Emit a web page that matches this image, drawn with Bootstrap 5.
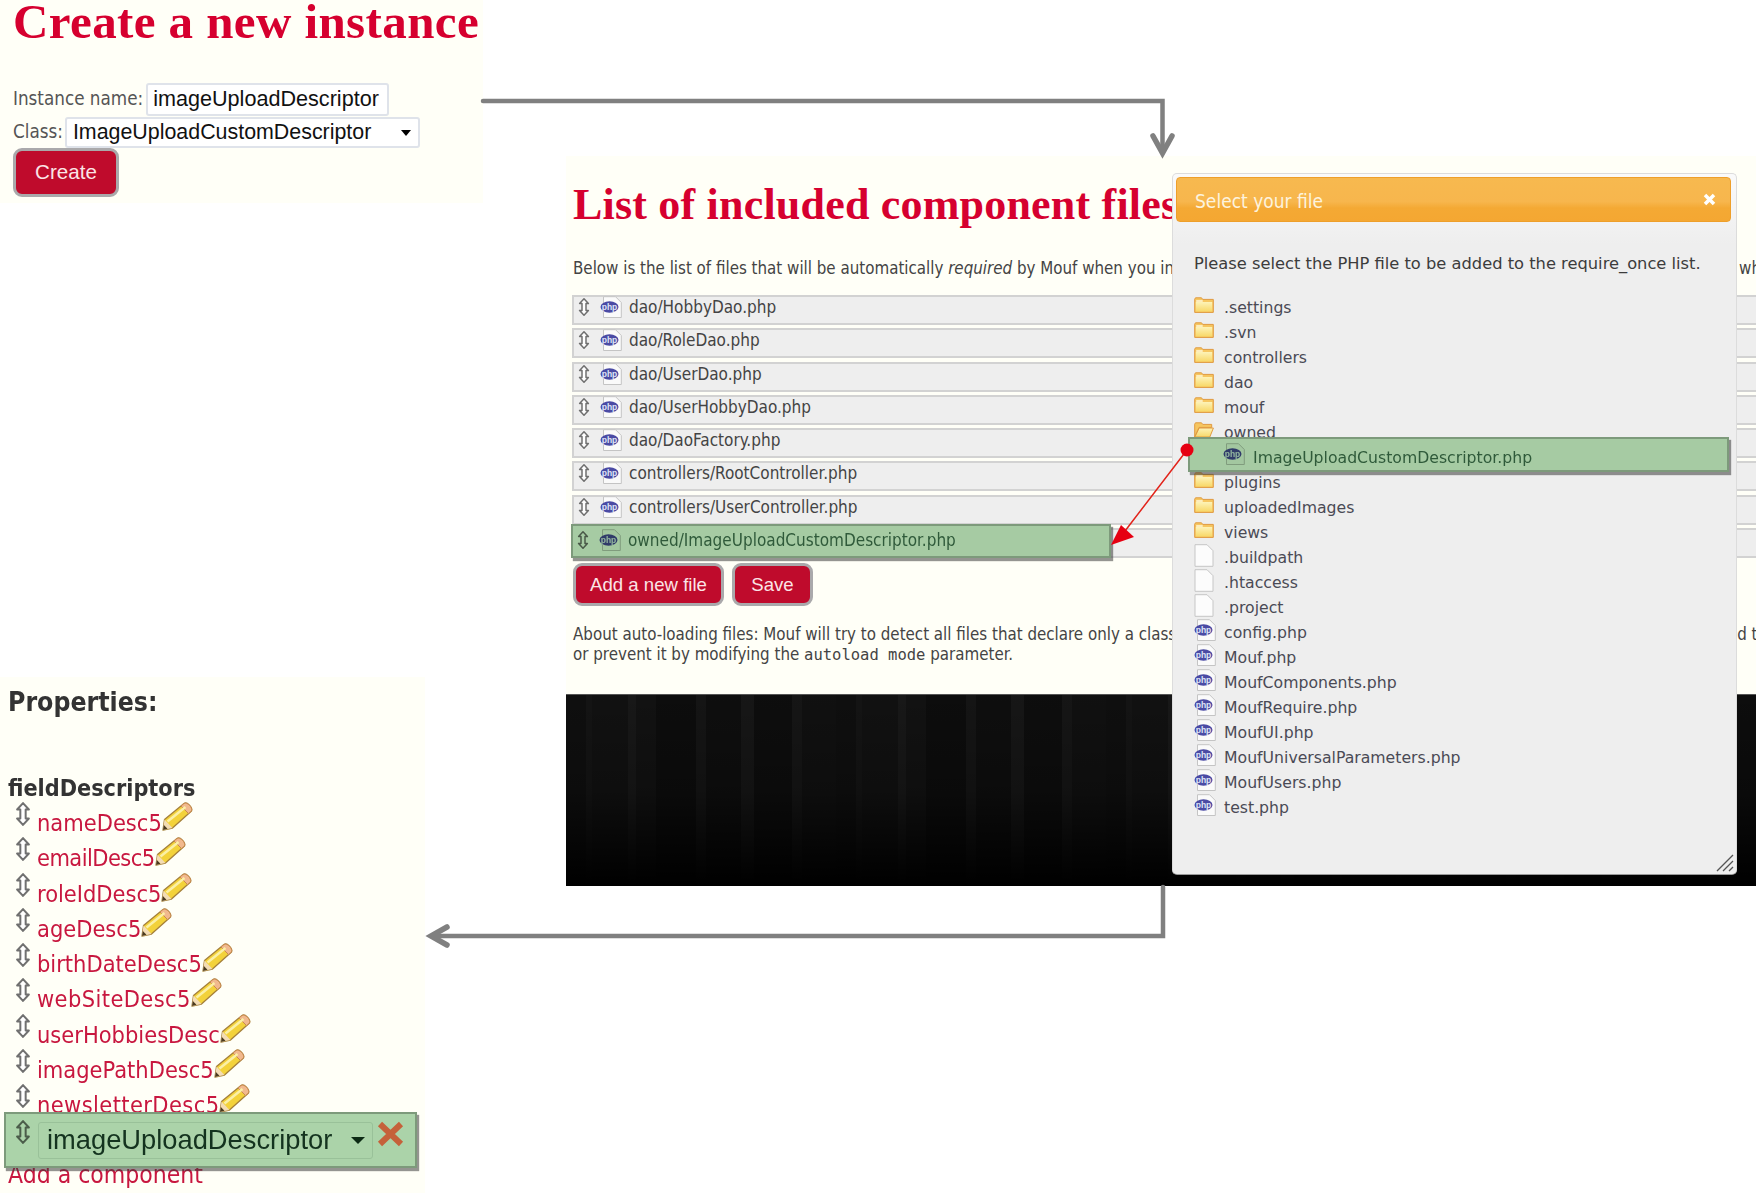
<!DOCTYPE html>
<html lang="en">
<head>
    <meta charset="UTF-8">
    <title>Mouf - create instance, select file, properties</title>
    <link href="https://cdn.jsdelivr.net/npm/bootstrap@5.3.0/dist/css/bootstrap.min.css" rel="stylesheet">
    <style>
        body { background: #fff; margin: 0; overflow: hidden; }
        .canvas { position: relative; width: 1756px; height: 1193px; overflow: hidden; filter: blur(.4px); }
        .tahoma { font-family: "DejaVu Sans", sans-serif; font-stretch: condensed; color: #444; }
        .shot { position: absolute; background: #fffff7; overflow: hidden; }
        .shot-create { left: 0; top: 0; width: 483px; height: 203px; }
        .shot-list { left: 566px; top: 156px; width: 1190px; height: 730px; display: flex; flex-direction: column; }
        .shot-props { left: 0; top: 677px; width: 425px; height: 516px; }
        .red-title { font-family: "Liberation Serif", serif; font-weight: 700; color: #d6002f; margin: 0; white-space: nowrap; }
        .red-title-lg { font-size: 49px; letter-spacing: .4px; line-height: 44px; padding-left: 13px; }
        .red-title-md { font-size: 44px; letter-spacing: .2px; line-height: 50px; padding: 24px 0 0 7px; }
        .form-area { padding: 39px 0 0 13px; }
        .form-line { display: flex; align-items: center; font-size: 18.7px; color: #555; }
        .fake-field { font-family: "Liberation Sans", sans-serif; color: #111; background: #fff; border: 2px solid #dfe3ea; border-radius: 3px; display: flex; align-items: center; justify-content: space-between; white-space: nowrap; }
        .field-name { width: 243px; height: 33px; font-size: 21.6px; padding-left: 5px; margin-left: 3px; }
        .field-class { width: 355px; height: 31px; font-size: 21.4px; padding: 0 7px 0 6px; margin: 1px 0 0 2px; }
        .caret-down { width: 0; height: 0; border-left: 5.5px solid transparent; border-right: 5.5px solid transparent; border-top: 6px solid #000; }
        .btn-mouf { background: #bf0b2c; color: #fbe4e6; border: 3px solid #aaa9ab; border-radius: 9px; font-family: "Liberation Sans", sans-serif; font-size: 18.6px; padding: 0; height: 43px; display: flex; align-items: center; justify-content: center; }
        .btn-create { width: 106px; height: 49px; font-size: 20.6px; }
        .btn-add { width: 151px; }
        .btn-save { width: 81px; }
        .intro-line { font-size: 16.8px; padding: 0 0 0 7px; margin: 25px 0 0; white-space: nowrap; height: 26px; line-height: 26px; }
        .hole-a { display: inline-block; width: 565px; }
        .hole-b { display: inline-block; width: 561px; }
        .file-rows { padding: 14px 0 0 6px; }
        .file-row { position: relative; height: 30px; margin-bottom: 3.3px; background: #eee; border: 2px solid #d2d2d2; border-right: 0; display: flex; align-items: flex-start; font-size: 17px; white-space: nowrap; }
        .file-row .ic-drag { margin: 1px 0 0 4px; }
        .file-row .ic-php { margin: -1px 0 0 10px; }
        .file-row span { margin: 0 0 0 7px; line-height: 20px; }
        .lifted { background: #a6cba3; border: 2px solid #7d9a7b; box-shadow: 2px 3px 1px rgba(60,60,60,.55); color: #2f5a3a; }
        .lifted svg { mix-blend-mode: multiply; }
        .file-row.lifted { position: absolute; left: 5px; top: 368px; width: 540px; height: 34px; padding-top: 4px; z-index: 2; }
        .btn-row { display: flex; gap: 8px; padding: 2px 0 0 7px; }
        .foot-note { font-size: 16.8px; padding: 19px 0 0 7px; line-height: 19.5px; white-space: nowrap; }
        .foot-note code { font-family: "DejaVu Sans Mono", monospace; font-size: 15.5px; line-height: 1; color: #444; }
        .wood { height: 192px; margin-top: auto; border-top: 1px solid #555; background: linear-gradient(180deg, rgba(0,0,0,.25) 0%, rgba(0,0,0,.4) 50%, #000 100%), linear-gradient(90deg, #141414 0 20px, #1b1b1b 20px 26px, #171717 26px 62px, #202020 62px 70px, #181818 70px 90px, #111 90px 130px, #1c1c1c 130px 140px, #131313 140px 175px, #1e1e1e 175px 188px, #121212 188px 226px, #1d1d1d 226px 236px, #161616 236px 270px) 0 0 / 270px 100%; }
        .modal-box { position: absolute; left: 1172px; top: 173px; width: 565px; height: 702px; background: linear-gradient(180deg, #fafafa 0, #eee 70px); border: 1px solid #dcdcdc; border-bottom-color: #999; border-radius: 5px; padding: 3px 5px 3px 3px; z-index: 3; }
        .modal-head { height: 45px; border-radius: 4px; border: 1px solid #ee9f2a; background: linear-gradient(180deg, #f7b94f 0, #f7b64d 55%, #f4a934 70%, #f4a732 100%); color: #fdf3dd; display: flex; align-items: center; justify-content: space-between; padding: 0 14px 0 18px; font-size: 19px; }
        .modal-head span { padding-top: 3px; }
        .modal-hint { font-size: 16.3px; margin: 0; padding: 30px 0 0 18px; height: 66px; white-space: nowrap; color: #3c3c3c; font-stretch: normal; }
        .pick-list { list-style: none; margin: 0; padding: 7px 0 0 18px; }
        .pick-list li { height: 25px; display: flex; align-items: center; font-size: 15.7px; color: #4a4a55; white-space: nowrap; font-stretch: normal; position: relative; }
        .pick-list li > span { position: absolute; left: 30px; }
        .pick-list li > svg { margin-top: -5px; }
        .pick-lifted { position: absolute; left: 15px; top: 263px; width: 541px; height: 35px; display: flex; align-items: center; padding-left: 33px; font-size: 15.7px; font-stretch: normal; white-space: nowrap; z-index: 2; }
        .pick-lifted span { margin: 6px 0 0 8px; }
        .pick-lifted svg { margin-top: -2px; }
        .grip-resize { position: absolute; right: 2px; bottom: 2px; }
        .prop-head { font-weight: 700; color: #333; white-space: nowrap; padding-left: 8px; margin: 0; }
        .prop-title { font-size: 26.4px; line-height: 34px; padding-top: 8px; height: 85px; }
        .prop-name { font-size: 23.2px; line-height: 34px; margin-top: 9px; height: 34px; }
        .prop-list { list-style: none; margin: 0; padding: 0 0 0 15px; }
        .prop-list li { height: 35.3px; display: flex; align-items: flex-start; font-size: 23.4px; white-space: nowrap; color: #c8173f; }
        .prop-list .ic-drag { margin-top: -3px; }
        .prop-list li > span { margin: 3px 0 0 6px; line-height: 30px; }
        .prop-list li > svg:last-child { margin: -4px 0 0 0; }
        .prop-list .tight { letter-spacing: -.55px; }
        .prop-list .loose { letter-spacing: .4px; }
        .prop-lifted { position: absolute; left: 4px; top: 435px; width: 413px; height: 56px; display: flex; align-items: center; padding-left: 9px; z-index: 2; background: #abd3a9; }
        .prop-lifted .ic-drag { align-self: flex-start; margin-top: 6px; }
        .prop-select { width: 335px; height: 37px; margin-left: 7px; border: 1px solid #99c199; border-radius: 3px; background: #abd3a9; font-family: "Liberation Sans", sans-serif; font-size: 27.3px; color: #14331f; display: flex; align-items: center; justify-content: space-between; padding: 0 7px 0 8px; }
        .prop-select .caret-down { border-top-color: #0c2a14; border-left-width: 7px; border-right-width: 7px; border-top-width: 7px; }
        .lifted .prop-remove { margin: -12px 0 0 4px; mix-blend-mode: normal; }
        .add-link { position: absolute; left: 8px; top: 480px; font-size: 24.5px; color: #c8173f; white-space: nowrap; }
        .overlay { position: absolute; left: 0; top: 0; z-index: 5; pointer-events: none; }
    </style>
</head>
<body>
    <!-- icons -->
    <svg width="0" height="0" class="d-block">
        <defs>
            <linearGradient id="folder-fill" x1="0" y1="0" x2="0" y2="1">
                <stop offset="0" stop-color="#fdf3b8"/>
                <stop offset="1" stop-color="#f8d868"/>
            </linearGradient>
            <symbol id="drag" viewBox="0 0 12 18">
                <path d="M6 .8 10.4 5.6H8v6.8h2.400L6 17.200 1.600 12.400H4V5.600H1.600z" fill="#fff" stroke="#707070" stroke-width="1.500" stroke-linejoin="round"/>
            </symbol>
            <symbol id="php" viewBox="0 0 22 22">
                <path d="M3.500 .7h12l5.800 5.800v15H3.500z" fill="#fafafa" stroke="#c4c4c4"/>
                <ellipse cx="9.500" cy="11" rx="9" ry="5.800" fill="#4a4aa4"/>
                <text x="9.500" y="13.500" font-family="Liberation Sans, sans-serif" font-size="8.500" font-weight="700" text-anchor="middle" fill="#dfe3f7">php</text>
            </symbol>
            <symbol id="folder" viewBox="0 0 20 16">
                <path d="M.7 2.200 1.500.8h6l1.200 1.600h10.600v13H.7z" fill="#f6c660" stroke="#e09a40"/>
                <path d="M1.800 5h16.400v9.500H1.800z" fill="url(#folder-fill)"/>
                <path d="M2.200 3.200h6.500v1.600H2.200z" fill="#fff7d6"/>
            </symbol>
            <symbol id="folder-open" viewBox="0 0 20 16">
                <path d="M.7 2.200 1.500.8h6l1.200 1.600h9v3H5L.7 15z" fill="#f6c660" stroke="#e09a40"/>
                <path d="M5.200 6h14.200l-3.600 9H.9z" fill="url(#folder-fill)" stroke="#e09a40"/>
            </symbol>
            <symbol id="blank" viewBox="0 0 20 23">
                <path d="M1 .7h12l6 6v15.600H1z" fill="#fcfcfc" stroke="#c6c6c6"/>
            </symbol>
            <symbol id="pencil" viewBox="0 0 32 30">
                <path d="M1 29 2.500 18.500 22 2.500c3-2 9 4 7.500 7.500L10.500 27z" fill="#f3d23a" stroke="#a5803a" stroke-width="1.300" stroke-linejoin="round"/>
                <path d="M22 2.500c3-2 9 4 7.500 7.500l-3 2.500-7.500-7.500z" fill="#f1b98e" stroke="#c98a50"/>
                <path d="M5.500 20.500 23.500 6" stroke="#fbf0a6" stroke-width="2.500"/>
                <path d="M1 29 2.500 18.500l8 8.500z" fill="#f3dcb4"/>
                <path d="M1 29 1.800 24l3.700 3.700z" fill="#4a3a20"/>
            </symbol>
        </defs>
    </svg>

    <div class="canvas tahoma">
        <!-- create instance -->
        <div class="shot shot-create">
            <h1 class="red-title red-title-lg">Create a new instance</h1>
            <form class="form-area">
                <div class="form-line">Instance name:<div class="fake-field field-name">imageUploadDescriptor</div></div>
                <div class="form-line">Class:<div class="fake-field field-class">ImageUploadCustomDescriptor<i class="caret-down"></i></div></div>
                <button type="button" class="btn btn-mouf btn-create">Create</button>
            </form>
        </div>

        <!-- list of included files -->
        <div class="shot shot-list">
            <h1 class="red-title red-title-md">List of included component files</h1>
            <p class="intro-line">Below is the list of files that will be automatically <em>required</em> by Mouf when you in<i class="hole-a"></i>wh</p>
            <div class="file-rows position-relative">
                <div class="file-row"><svg class="ic-drag" width="12" height="18"><use href="#drag"/></svg><svg class="ic-php" width="22" height="22"><use href="#php"/></svg><span>dao/HobbyDao.php</span></div>
                <div class="file-row"><svg class="ic-drag" width="12" height="18"><use href="#drag"/></svg><svg class="ic-php" width="22" height="22"><use href="#php"/></svg><span>dao/RoleDao.php</span></div>
                <div class="file-row"><svg class="ic-drag" width="12" height="18"><use href="#drag"/></svg><svg class="ic-php" width="22" height="22"><use href="#php"/></svg><span>dao/UserDao.php</span></div>
                <div class="file-row"><svg class="ic-drag" width="12" height="18"><use href="#drag"/></svg><svg class="ic-php" width="22" height="22"><use href="#php"/></svg><span>dao/UserHobbyDao.php</span></div>
                <div class="file-row"><svg class="ic-drag" width="12" height="18"><use href="#drag"/></svg><svg class="ic-php" width="22" height="22"><use href="#php"/></svg><span>dao/DaoFactory.php</span></div>
                <div class="file-row"><svg class="ic-drag" width="12" height="18"><use href="#drag"/></svg><svg class="ic-php" width="22" height="22"><use href="#php"/></svg><span>controllers/RootController.php</span></div>
                <div class="file-row"><svg class="ic-drag" width="12" height="18"><use href="#drag"/></svg><svg class="ic-php" width="22" height="22"><use href="#php"/></svg><span>controllers/UserController.php</span></div>
                <div class="file-row"></div>
            </div>
            <div class="file-row lifted"><svg class="ic-drag" width="12" height="18"><use href="#drag"/></svg><svg class="ic-php" width="22" height="22"><use href="#php"/></svg><span>owned/ImageUploadCustomDescriptor.php</span></div>
            <div class="btn-row">
                <button type="button" class="btn btn-mouf btn-add">Add a new file</button>
                <button type="button" class="btn btn-mouf btn-save">Save</button>
            </div>
            <p class="foot-note m-0">About auto-loading files: Mouf will try to detect all files that declare only a class<i class="hole-b"></i>d t<br>or prevent it by modifying the <code>autoload mode</code> parameter.</p>
            <div class="wood"></div>
        </div>

        <!-- select your file dialog -->
        <div class="modal-box">
            <div class="modal-head"><span>Select your file</span><svg width="13" height="13"><path d="M2 2 11 11M11 2 2 11" stroke="#fff" stroke-width="3.500"/></svg></div>
            <p class="modal-hint">Please select the PHP file to be added to the require_once list.</p>
            <ul class="pick-list">
                <li><svg width="20" height="16"><use href="#folder"/></svg><span>.settings</span></li>
                <li><svg width="20" height="16"><use href="#folder"/></svg><span>.svn</span></li>
                <li><svg width="20" height="16"><use href="#folder"/></svg><span>controllers</span></li>
                <li><svg width="20" height="16"><use href="#folder"/></svg><span>dao</span></li>
                <li><svg width="20" height="16"><use href="#folder"/></svg><span>mouf</span></li>
                <li><svg width="20" height="16"><use href="#folder-open"/></svg><span>owned</span></li>
                <li></li>
                <li><svg width="20" height="16"><use href="#folder"/></svg><span>plugins</span></li>
                <li><svg width="20" height="16"><use href="#folder"/></svg><span>uploadedImages</span></li>
                <li><svg width="20" height="16"><use href="#folder"/></svg><span>views</span></li>
                <li><svg width="20" height="23"><use href="#blank"/></svg><span>.buildpath</span></li>
                <li><svg width="20" height="23"><use href="#blank"/></svg><span>.htaccess</span></li>
                <li><svg width="20" height="23"><use href="#blank"/></svg><span>.project</span></li>
                <li><svg width="22" height="22"><use href="#php"/></svg><span>config.php</span></li>
                <li><svg width="22" height="22"><use href="#php"/></svg><span>Mouf.php</span></li>
                <li><svg width="22" height="22"><use href="#php"/></svg><span>MoufComponents.php</span></li>
                <li><svg width="22" height="22"><use href="#php"/></svg><span>MoufRequire.php</span></li>
                <li><svg width="22" height="22"><use href="#php"/></svg><span>MoufUI.php</span></li>
                <li><svg width="22" height="22"><use href="#php"/></svg><span>MoufUniversalParameters.php</span></li>
                <li><svg width="22" height="22"><use href="#php"/></svg><span>MoufUsers.php</span></li>
                <li><svg width="22" height="22"><use href="#php"/></svg><span>test.php</span></li>
            </ul>
            <div class="pick-lifted lifted"><svg width="22" height="22"><use href="#php"/></svg><span>ImageUploadCustomDescriptor.php</span></div>
            <svg class="grip-resize" width="18" height="18"><path d="M1 17 17 1M7 17 17 7M13 17l4-4" stroke="#555" stroke-width="1.300"/></svg>
        </div>

        <!-- properties -->
        <div class="shot shot-props">
            <h2 class="prop-head prop-title">Properties:</h2>
            <h3 class="prop-head prop-name">fieldDescriptors</h3>
            <ul class="prop-list">
                <li><svg class="ic-drag" width="16" height="24"><use href="#drag"/></svg><span>nameDesc5</span><svg width="32" height="30"><use href="#pencil"/></svg></li>
                <li><svg class="ic-drag" width="16" height="24"><use href="#drag"/></svg><span class="tight">emailDesc5</span><svg width="32" height="30"><use href="#pencil"/></svg></li>
                <li><svg class="ic-drag" width="16" height="24"><use href="#drag"/></svg><span>roleIdDesc5</span><svg width="32" height="30"><use href="#pencil"/></svg></li>
                <li><svg class="ic-drag" width="16" height="24"><use href="#drag"/></svg><span>ageDesc5</span><svg width="32" height="30"><use href="#pencil"/></svg></li>
                <li><svg class="ic-drag" width="16" height="24"><use href="#drag"/></svg><span>birthDateDesc5</span><svg width="32" height="30"><use href="#pencil"/></svg></li>
                <li><svg class="ic-drag" width="16" height="24"><use href="#drag"/></svg><span class="loose">webSiteDesc5</span><svg width="32" height="30"><use href="#pencil"/></svg></li>
                <li><svg class="ic-drag" width="16" height="24"><use href="#drag"/></svg><span>userHobbiesDesc</span><svg width="32" height="30"><use href="#pencil"/></svg></li>
                <li><svg class="ic-drag" width="16" height="24"><use href="#drag"/></svg><span>imagePathDesc5</span><svg width="32" height="30"><use href="#pencil"/></svg></li>
                <li><svg class="ic-drag" width="16" height="24"><use href="#drag"/></svg><span class="loose">newsletterDesc5</span><svg width="32" height="30"><use href="#pencil"/></svg></li>
            </ul>
            <span class="add-link">Add a component</span>
            <div class="prop-lifted lifted">
                <svg class="ic-drag" width="16" height="24"><use href="#drag"/></svg>
                <div class="prop-select">imageUploadDescriptor<i class="caret-down"></i></div>
                <svg class="prop-remove" width="27" height="26" viewBox="0 0 27 26"><path d="M3 3 24 23M24 3 3 23" stroke="#c5613a" stroke-width="6"/></svg>
            </div>
        </div>

        <!-- arrows between the screens -->
        <svg class="overlay" width="1756" height="1193" fill="none" stroke-linecap="round">
            <path d="M483 101H1162.500V152" stroke="#808080" stroke-width="4.500"/>
            <path d="M1153 136 1162.500 153 1172 136" stroke="#808080" stroke-width="5.500"/>
            <path d="M1163 887V936H432" stroke="#808080" stroke-width="4.500"/>
            <path d="M447 927 431 936 447 945" stroke="#808080" stroke-width="5.500"/>
            <path d="M1187 450 1125 531" stroke="#e2231a" stroke-width="1.500"/>
            <circle cx="1187" cy="450" r="6.500" fill="#e60012"/>
            <path d="M1111 545 1121 525 1134 537z" fill="#e60012"/>
        </svg>
    </div>

    <script src="https://cdn.jsdelivr.net/npm/bootstrap@5.3.0/dist/js/bootstrap.bundle.min.js"></script>
</body>
</html>
